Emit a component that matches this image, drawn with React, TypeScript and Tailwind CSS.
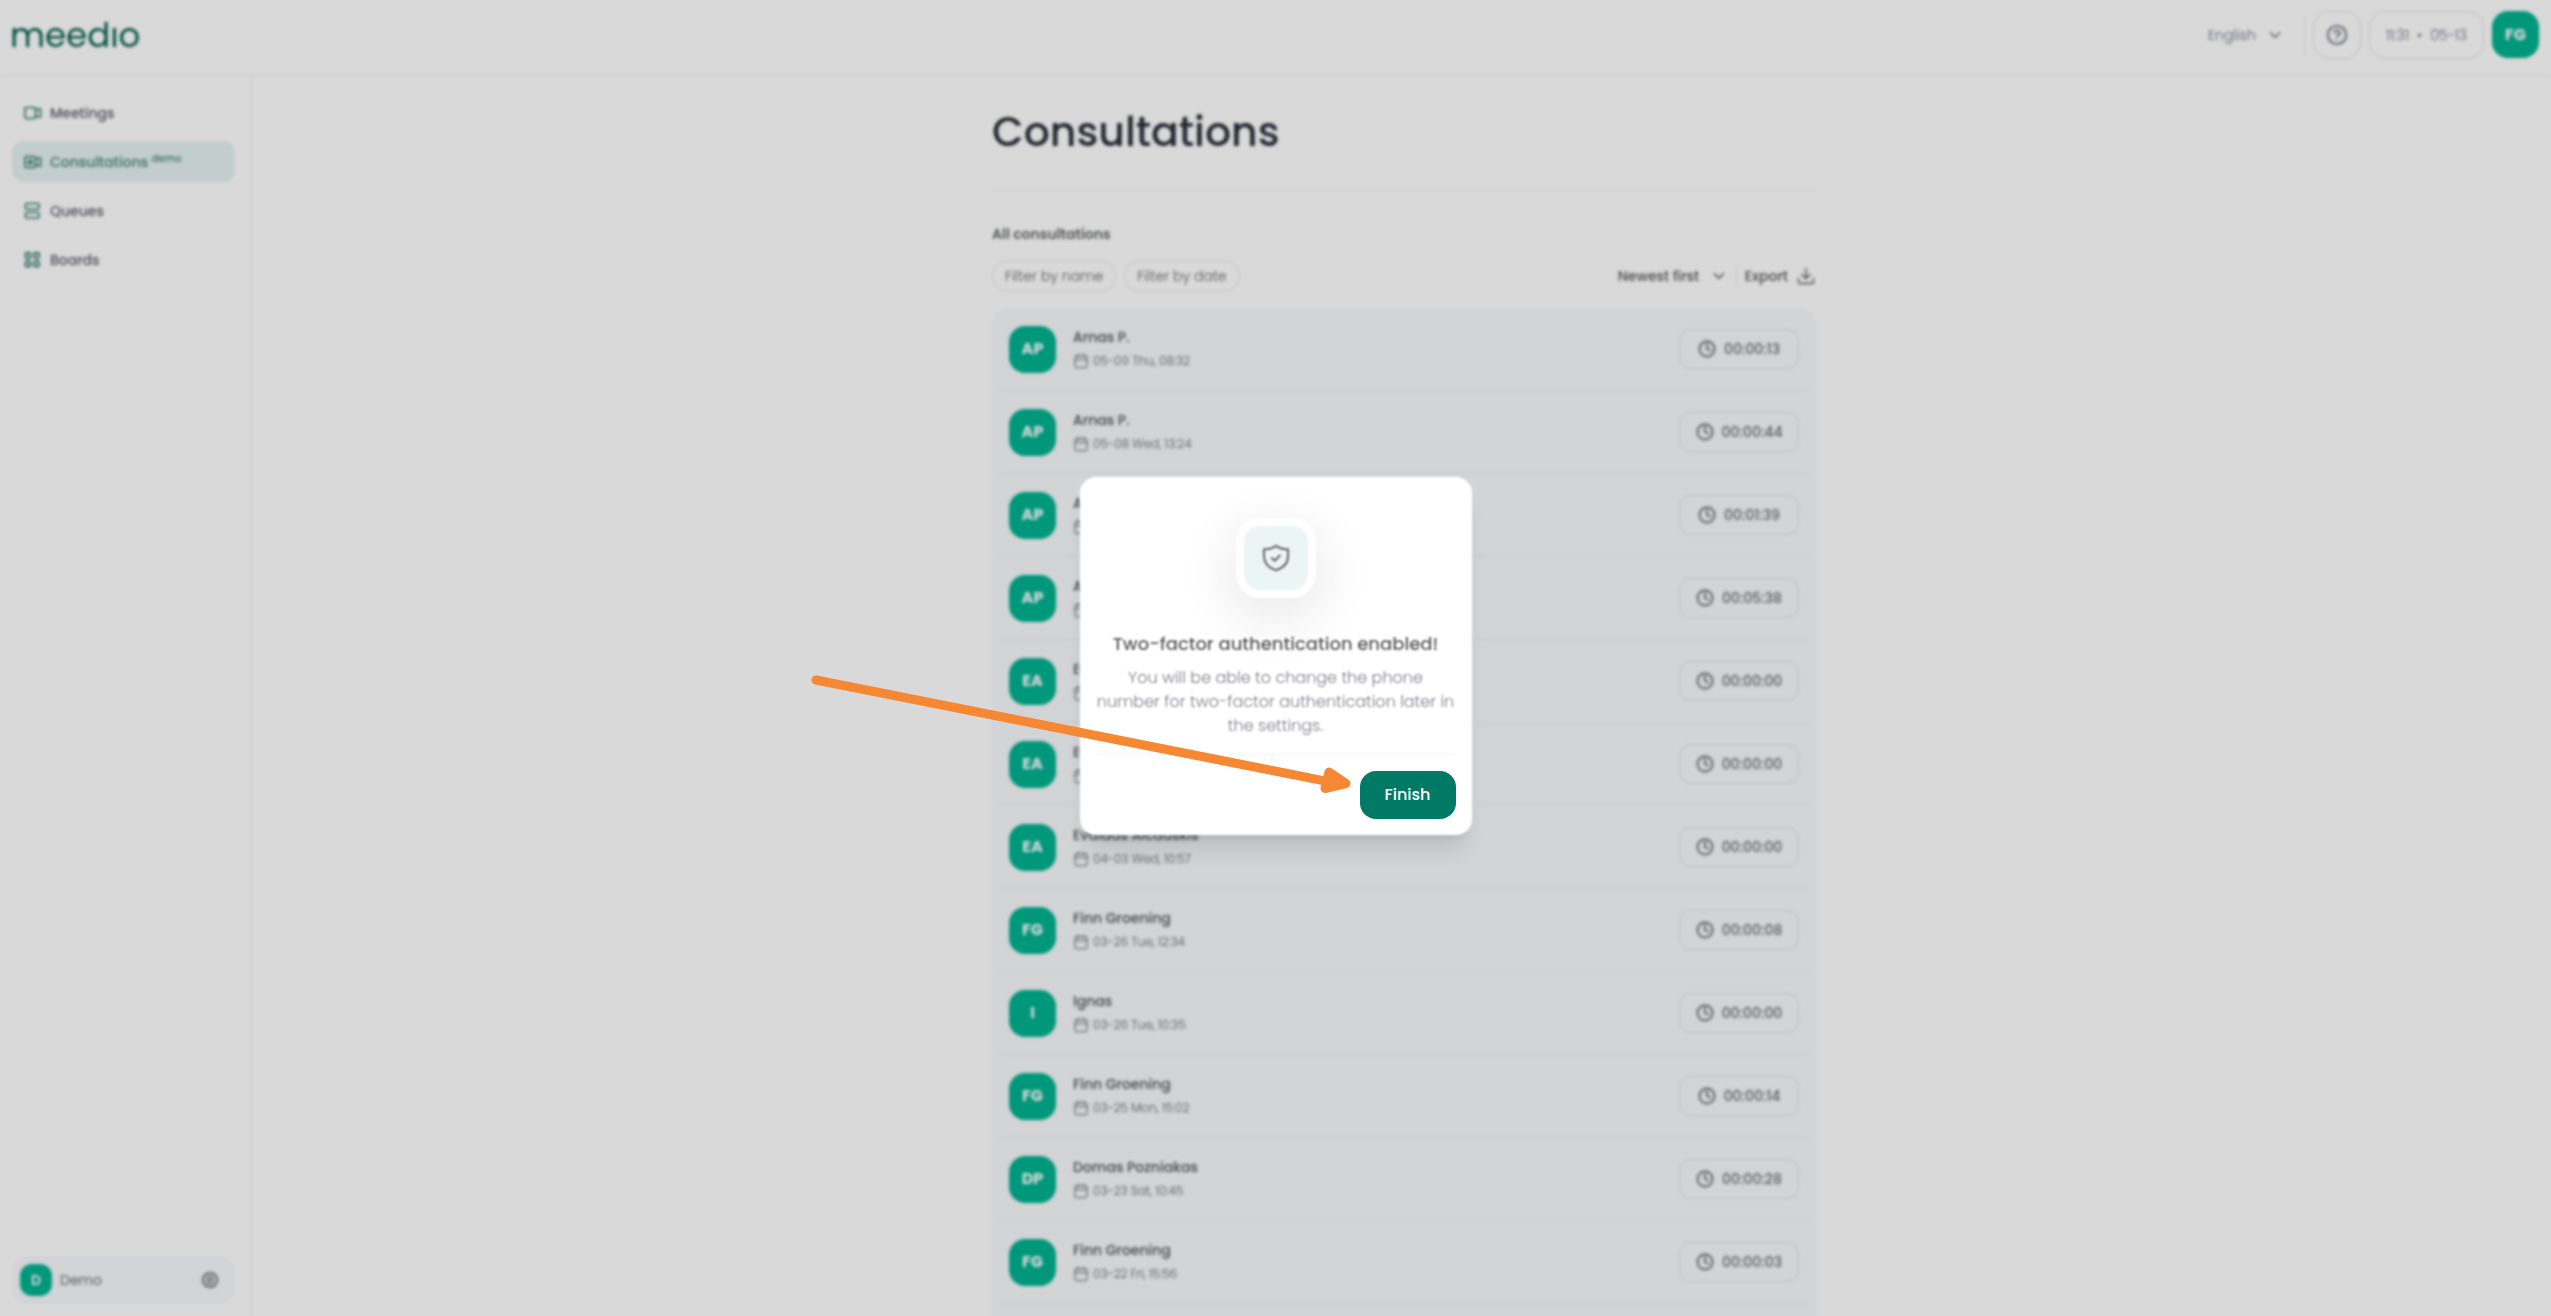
import {
  Calendar,
  ChevronDown,
  CircleHelp,
  Clock,
  Download,
} from "lucide-react";

type Consultation = {
  initials: string;
  name: string;
  date: string;
  duration: string;
};

const consultations: Consultation[] = [
  { initials: "AP", name: "Arnas P.", date: "05-09 Thu, 08:32", duration: "00:00:13" },
  { initials: "AP", name: "Arnas P.", date: "05-08 Wed, 13:24", duration: "00:00:44" },
  { initials: "AP", name: "Arnas P.", date: "05-08 Wed, 13:20", duration: "00:01:39" },
  { initials: "AP", name: "Arnas P.", date: "05-08 Wed, 13:10", duration: "00:05:38" },
  { initials: "EA", name: "Evaldas Alcauskis", date: "04-03 Wed, 11:02", duration: "00:00:00" },
  { initials: "EA", name: "Evaldas Alcauskis", date: "04-03 Wed, 10:59", duration: "00:00:00" },
  { initials: "EA", name: "Evaldas Alcauskis", date: "04-03 Wed, 10:57", duration: "00:00:00" },
  { initials: "FG", name: "Finn Groening", date: "03-26 Tue, 12:34", duration: "00:00:08" },
  { initials: "I", name: "Ignas", date: "03-26 Tue, 10:35", duration: "00:00:00" },
  { initials: "FG", name: "Finn Groening", date: "03-25 Mon, 15:02", duration: "00:00:14" },
  { initials: "DP", name: "Domas Pozniakas", date: "03-23 Sat, 10:45", duration: "00:00:28" },
  { initials: "FG", name: "Finn Groening", date: "03-22 Fri, 15:56", duration: "00:00:03" },
];

function CameraIcon({ plus = false }: { plus?: boolean }) {
  return (
    <svg className="size-[18px] shrink-0" viewBox="0 0 18 18" fill="none" stroke="#2c7563" strokeWidth="1.6" strokeLinejoin="round">
      <rect x="1" y="3.5" width="10.500" height="11" rx="1.5" />
      <path d="M11.500 7 14 5h2.500v8H14l-2.500-2" />
      {plus && <path d="M6.250 6.750v4.500M4 9h4.500" strokeWidth="2" strokeLinecap="round" />}
    </svg>
  );
}

function QueueIcon() {
  return (
    <svg className="size-[18px] shrink-0" viewBox="0 0 18 18" fill="none" stroke="#2c7563" strokeWidth="1.6">
      <rect x="1.500" y="1.500" width="13.500" height="5.500" rx="1.500" />
      <rect x="1.500" y="10.500" width="13.500" height="5.500" rx="1.500" />
    </svg>
  );
}

function BoardIcon() {
  return (
    <svg className="size-[18px] shrink-0" viewBox="0 0 18 18" fill="none" stroke="#2c7563" strokeWidth="1.8">
      <rect x="1.500" y="2" width="5" height="5" rx="1.200" />
      <rect x="10" y="2" width="5" height="5" rx="1.200" />
      <rect x="1.500" y="10.500" width="5" height="5" rx="1.200" />
      <rect x="10" y="10.500" width="5" height="5" rx="1.200" />
    </svg>
  );
}

function GearIcon() {
  return (
    <svg className="size-[18px]" viewBox="0 0 18 18" fill="none" stroke="currentColor" strokeWidth="1.8" strokeLinejoin="round">
      <path d="M9 1.500 11 3l2.500-.2.8 2.400 2 1.500L15.500 9l.8 2.300-2 1.500-.8 2.400L11 15l-2 1.500L7 15l-2.500.2-.8-2.400-2-1.500L2.500 9l-.8-2.300 2-1.500.8-2.400L7 3z" />
      <rect x="6.500" y="6.500" width="5" height="5" rx="1.500" />
    </svg>
  );
}

function ShieldIcon() {
  return (
    <svg className="size-8" viewBox="0 0 32 32" fill="none" stroke="#6f7372" strokeWidth="2.200" strokeLinecap="round" strokeLinejoin="round">
      <path d="M16 3.800c3 2.400 7 3.400 12 3.600v6.800c0 7-4.500 11.600-12 14-7.500-2.400-12-7-12-14V7.400c5-.2 9-1.200 12-3.600z" />
      <path d="m12 16.200 2.800 2.600 5-5.200" />
    </svg>
  );
}

function Header() {
  return (
    <header className="flex h-[76px] shrink-0 items-center justify-between border-b border-[#eeeef0] pr-3 pb-1.5 pl-2.5">
      <a href="#" className="text-[34px] leading-[44px] text-[#005f48]">
        meedıo
      </a>
      <div className="flex items-center">
        <label className="relative mr-5 flex items-center text-[#6d707e]">
          <select aria-label="Language" className="appearance-none pr-7 text-sm font-light">
            <option>English</option>
          </select>
          <ChevronDown className="pointer-events-none absolute right-0 size-[18px]" />
        </label>
        <div className="mr-2 h-10 w-px bg-[#e2eeeb]" />
        <button aria-label="Help" className="mr-2 flex size-12 items-center justify-center rounded-2xl border border-[#e0e0e4] text-[#6d7082]">
          <CircleHelp className="size-[22px]" />
        </button>
        <div className="mr-2 flex h-12 items-center gap-2 rounded-2xl border border-[#e0e0e4] px-4 text-sm font-light text-[#6a6d80]">
          <span>11:31</span>
          <span>•</span>
          <span>05-13</span>
        </div>
        <button className="size-[47px] rounded-2xl bg-[#00b291] text-base font-bold text-white">
          FG
        </button>
      </div>
    </header>
  );
}

function Sidebar() {
  const item = "flex h-[41px] items-center gap-2 rounded-xl px-3 text-sm font-medium";
  return (
    <aside className="flex w-[252px] shrink-0 flex-col justify-between border-r border-[#e4eceb] px-3 pt-4 pb-3">
      <nav className="flex flex-col gap-2 pr-1">
        <a href="#" className={`${item} text-[#5a5b66]`}>
          <CameraIcon />
          Meetings
        </a>
        <a href="#" className={`${item} bg-[#e6f2f0] text-[#417f71]`}>
          <CameraIcon plus />
          <span>
            Consultations <sup className="text-[10px]">demo</sup>
          </span>
        </a>
        <a href="#" className={`${item} text-[#5a5b66]`}>
          <QueueIcon />
          Queues
        </a>
        <a href="#" className={`${item} text-[#5a5b66]`}>
          <BoardIcon />
          Boards
        </a>
      </nav>
      <div className="mr-1 flex h-12 items-center rounded-2xl bg-[#f7f9fb] px-2">
        <span className="flex size-8 items-center justify-center rounded-xl bg-[#00b291] text-sm font-semibold text-white">
          D
        </span>
        <span className="ml-2 flex-1 text-sm text-[#6f7175]">Demo</span>
        <button aria-label="Settings" className="mr-2 text-[#6a6c70]">
          <GearIcon />
        </button>
      </div>
    </aside>
  );
}

function ConsultationRow({ item }: { item: Consultation }) {
  return (
    <li className="flex h-[83px] items-center border-b border-[#ebedef] px-[9px]">
      <span className="flex size-[47px] items-center justify-center rounded-2xl bg-[#00b291] text-base font-bold text-white">
        {item.initials}
      </span>
      <div className="ml-[17px] flex-1">
        <p className="text-sm leading-6 font-medium text-[#505256]">{item.name}</p>
        <p className="flex items-center gap-1 text-xs leading-6 font-light text-[#5f616a]">
          <Calendar className="size-4" strokeWidth={1.5} />
          {item.date}
        </p>
      </div>
      <div className="flex h-10 w-[120px] items-center justify-center gap-2 rounded-xl border border-[#e0e2e5] text-sm font-medium text-[#696c74]">
        <Clock className="size-[18px]" strokeWidth={2.5} />
        {item.duration}
      </div>
    </li>
  );
}

function Consultations() {
  return (
    <main className="min-w-0 flex-1 overflow-hidden pl-[5px]">
      <div className="mx-auto w-full max-w-[824px]">
        <h1 className="border-b border-[#eeeef0] pt-[26px] pb-7 text-[41px] leading-[60px] font-medium text-[#2a2c38]">
          Consultations
        </h1>
        <h2 className="mt-[31px] text-sm leading-6 font-semibold text-[#626467]">All consultations</h2>
        <div className="mt-3.5 flex items-center justify-between">
          <div className="flex gap-2 text-sm font-light text-[#626468]">
            <button className="h-8 rounded-full border border-[#e6e6ea] px-3">Filter by name</button>
            <button className="h-8 rounded-full border border-[#e6e6ea] px-3">Filter by date</button>
          </div>
          <div className="flex items-center text-sm font-medium text-[#55575a]">
            <label className="relative flex items-center">
              <select aria-label="Sort order" className="appearance-none pr-7">
                <option>Newest first</option>
              </select>
              <ChevronDown className="pointer-events-none absolute right-0 size-[18px]" />
            </label>
            <div className="mx-2 h-5 w-px bg-[#e6e6ea]" />
            <button className="flex items-center gap-2">
              Export
              <Download className="size-5" strokeWidth={1.6} />
            </button>
          </div>
        </div>
        <ul className="mt-4 rounded-2xl bg-[#f7f9fb] px-2 pb-20">
          {consultations.map((item, index) => (
            <ConsultationRow key={index} item={item} />
          ))}
        </ul>
      </div>
    </main>
  );
}

function Arrow() {
  return (
    <svg
      className="pointer-events-none absolute top-[192px] -left-[280px] h-[140px] w-[560px]"
      viewBox="0 0 560 140"
      fill="#f68733"
      stroke="#f68733"
      strokeLinecap="round"
      strokeLinejoin="round"
    >
      <path d="M16 11 525 112" strokeWidth="9" />
      <path d="M529 103 546 114.500 525 119.500z" strokeWidth="9" />
    </svg>
  );
}

function TwoFactorDialog() {
  return (
    <div className="fixed inset-0 flex items-center justify-center bg-black/15 pb-1 backdrop-blur-[1px]">
      <div
        role="dialog"
        aria-labelledby="two-factor-title"
        className="relative w-[392px] px-4 pt-[41px] pb-4"
      >
        <div className="absolute inset-0 rounded-2xl bg-white shadow-xl blur-[1px]" />
        <div className="relative text-center blur-[1px]">
          <div className="mx-auto flex size-20 items-center justify-center rounded-3xl bg-white shadow-[0_16px_56px_rgba(30,30,60,0.12)]">
            <div className="flex size-16 items-center justify-center rounded-2xl bg-[#ebf5f3]">
              <ShieldIcon />
            </div>
          </div>
          <h2 id="two-factor-title" className="mt-[30px] text-lg leading-8 font-medium text-[#5d5e60]">
            Two-factor authentication enabled!
          </h2>
          <p className="mt-1.5 border-b border-[#f4f4f5] pb-4 text-base leading-6 font-light text-[#80828a]">
            You will be able to change the phone number for two-factor authentication later in the settings.
          </p>
        </div>
        <div className="relative mt-4 flex justify-end">
          <button className="h-12 w-24 rounded-2xl bg-[#007a64] text-base font-medium text-white">
            Finish
          </button>
        </div>
        <Arrow />
      </div>
    </div>
  );
}

export default function App() {
  return (
    <>
      {/* the page goes soft behind the open dialog */}
      <div className="flex h-screen flex-col overflow-hidden bg-white font-['Poppins','Inter',sans-serif] blur-[1px]">
        <Header />
        <div className="flex min-h-0 flex-1">
          <Sidebar />
          <Consultations />
        </div>
      </div>
      <div className="font-['Poppins','Inter',sans-serif]">
        <TwoFactorDialog />
      </div>
    </>
  );
}
